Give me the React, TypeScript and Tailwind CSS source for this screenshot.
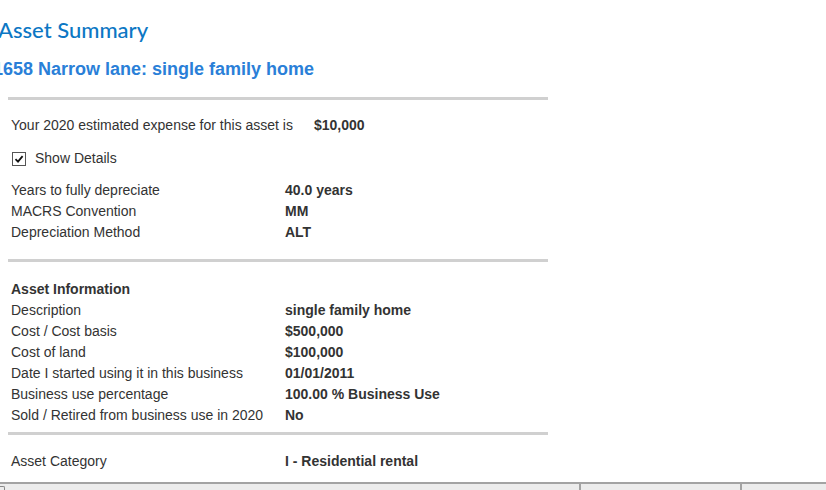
import React from "react";

const details = [
  { label: "Years to fully depreciate", value: "40.0 years" },
  { label: "MACRS Convention", value: "MM" },
  { label: "Depreciation Method", value: "ALT" },
];

const assetInfo = [
  { label: "Description", value: "single family home" },
  { label: "Cost / Cost basis", value: "$500,000" },
  { label: "Cost of land", value: "$100,000" },
  { label: "Date I started using it in this business", value: "01/01/2011" },
  { label: "Business use percentage", value: "100.00 % Business Use" },
  { label: "Sold / Retired from business use in 2020", value: "No" },
];

const Row = ({ label, value }: { label: string; value: string }) => (
  <div className="grid grid-cols-[274px_1fr] h-[21px] leading-[21px]">
    <span>{label}</span>
    <span className="font-bold">{value}</span>
  </div>
);

const Rule = () => <div className="h-[3px] bg-[#d0d0d0] w-[540px]" />;

export default function App() {
  return (
    <div className="w-[826px] h-[490px] overflow-hidden bg-white text-[14px] text-[#333] font-['Liberation_Sans',Arial,sans-serif] flex flex-col">
      <h1 className="-ml-[2px] mt-[16px] h-[28px] leading-[28px] text-[22px] font-medium text-[#0c77c4] font-['Lato','Open_Sans',sans-serif]">
        Asset Summary
      </h1>
      <h2 className="-ml-[7px] mt-[14px] h-[22px] leading-[22px] text-[18px] font-bold text-[#2a7fd8]">
        1658 Narrow lane: single family home
      </h2>

      <div className="ml-[8px] mt-[17px] flex flex-col">
        <Rule />
        <div className="pl-[3px]">
          <div className="mt-[15px] h-[21px] leading-[21px] flex">
            <span className="w-[303px]">Your 2020 estimated expense for this asset is</span>
            <span className="font-bold">$10,000</span>
          </div>
          <label className="mt-[12px] h-[21px] flex items-center gap-[9px] pl-[1px]">
            <span className="w-[14px] h-[14px] border border-[#555] bg-white flex items-center justify-center">
              <svg width="10" height="10" viewBox="0 0 10 10">
                <path d="M1.5 5.2 L4 7.6 L8.6 2.2" fill="none" stroke="#111" strokeWidth="1.8" />
              </svg>
            </span>
            <span>Show Details</span>
          </label>
          <div className="mt-[11px]">
            {details.map((d) => (
              <Row key={d.label} {...d} />
            ))}
          </div>
        </div>

        <div className="mt-[16px]">
          <Rule />
        </div>
        <div className="pl-[3px] mt-[17px]">
          <div className="h-[21px] leading-[21px] font-bold">Asset Information</div>
          {assetInfo.map((d) => (
            <Row key={d.label} {...d} />
          ))}
        </div>

        <div className="mt-[6px]">
          <Rule />
        </div>
        <div className="pl-[3px] mt-[16px]">
          <Row label="Asset Category" value="I - Residential rental" />
        </div>
      </div>

      <div className="mt-[10px] flex-1 border-t-2 border-[#a3a3a3] bg-[#ececec] flex relative">
        <div className="absolute left-0 top-[2px] w-[5px] h-[6px] border-t border-r border-[#888] rounded-tr-[2px]" />
        <div className="w-[581px] border-r-2 border-[#a3a3a3]" />
        <div className="w-[161px] border-r-2 border-[#a3a3a3]" />
        <div className="flex-1" />
      </div>
    </div>
  );
}
